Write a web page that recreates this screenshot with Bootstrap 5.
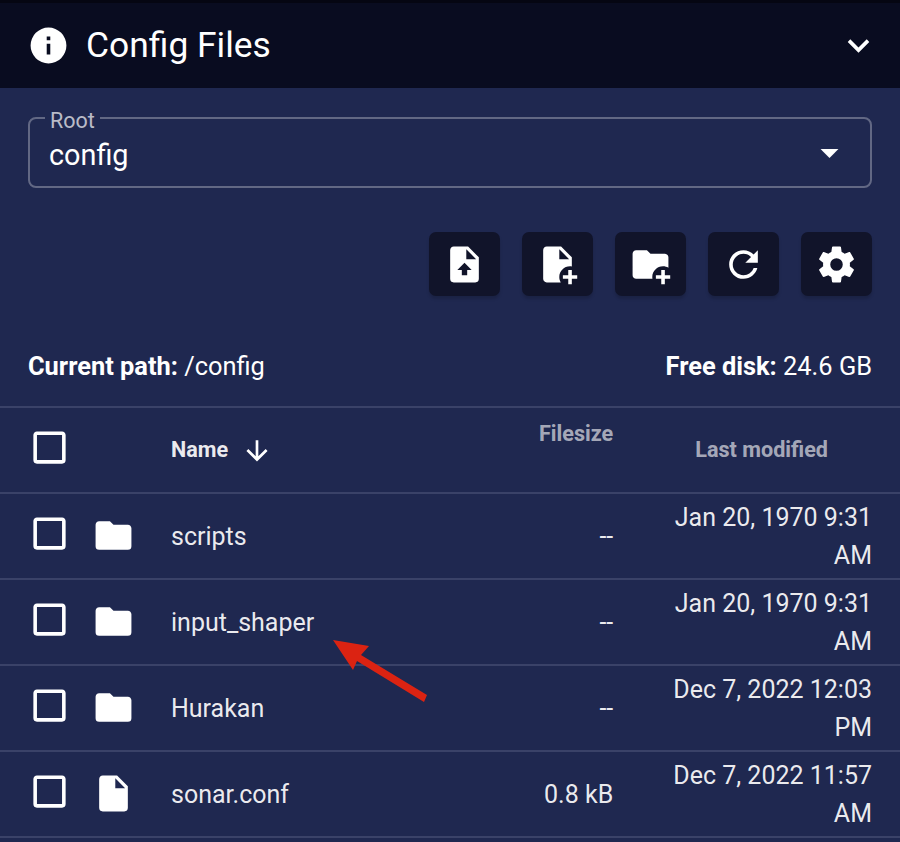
<!DOCTYPE html>
<html lang="en">
<head>
<meta charset="utf-8">
<title>Config Files</title>
<link rel="stylesheet" href="https://cdn.jsdelivr.net/npm/bootstrap@5.3.0/dist/css/bootstrap.min.css">
<style>
html,body{height:842px;overflow:hidden}
body{background:#1f2850;color:#fff;font-family:Roboto,"Liberation Sans",sans-serif;font-size:25px;position:relative}
.panel-head{height:88px;background:#090c20;border-top:3px solid #050612;padding:0 20px 0 27px}
.panel-title{font-size:35.4px;font-weight:400;margin:0}
.ico{width:43px;height:43px;fill:#fff;flex:none;display:block}
.root-box{margin:16px 28px 0;height:84px;border:2px solid rgba(255,255,255,.3);border-radius:8px;padding:0 19px;min-width:0}
.root-box legend{float:none;width:auto;font-size:21.5px;line-height:1;margin:0 0 0 -4px;padding:6px 5px 0;color:rgba(255,255,255,.7)}
.root-line{margin-top:-1px}
.root-val{font-size:28.8px;line-height:34px;margin-top:6px}
.tools{padding:44px 28px 0;gap:22px}
.tool-btn{width:71px;height:64px;background:#11142a;border:0;border-radius:7px;padding:0;box-shadow:0 3px 3px rgba(0,0,0,.15)}
.tool-btn:hover{background:#11142a}
.path-row{padding:52px 28px 0;height:110px;line-height:36px;font-size:25.4px}
.path-row strong{font-weight:700}
.file-table{table-layout:fixed;width:900px;margin:0;--bs-table-bg:transparent;--bs-table-color:rgba(255,255,255,.92);border-top:2px solid #3a4268}
.file-table th,.file-table td{border-bottom:2px solid #3a4268;padding:2px 0 0;height:86px;vertical-align:middle}
.file-table th{font-size:21.6px;font-weight:700;line-height:30px}
.file-table .c-check{width:92px;padding:0 0 0 28px}
.file-table .c-check .ico{margin-bottom:6px}
.file-table .c-icon{width:79px;padding:0}
.file-table .c-icon .ico{margin-bottom:2px}
.file-table .c-size{width:171px;text-align:right;padding-right:28.8px}
.file-table .c-date{width:258px;text-align:right;padding:2px 28px 0 28.8px;line-height:38px}
.file-table th.c-date{padding-top:0}
.file-table .head-muted{color:rgba(255,255,255,.62)}
.sort-ico{width:32px;height:32px;fill:#fff;display:inline-block;margin-left:13px;vertical-align:-10px}
.sort-gap{display:inline-block;width:44px;height:30px;vertical-align:top}
.file-table .th-up{vertical-align:top;padding-top:11px}
.marker{position:absolute;left:325px;top:632px;width:110px;height:75px}
</style>
</head>
<body>
<header class="panel-head d-flex align-items-center justify-content-between">
  <div class="d-flex align-items-center gap-3">
    <svg class="ico" viewBox="0 0 24 24"><path d="M13,9H11V7H13M13,17H11V11H13M12,2A10,10 0 0,0 2,12A10,10 0 0,0 12,22A10,10 0 0,0 22,12A10,10 0 0,0 12,2Z"/></svg>
    <h1 class="panel-title">Config Files</h1>
  </div>
  <svg class="ico" viewBox="0 0 24 24"><path d="M7.41,8.58L12,13.17L16.59,8.58L18,10L12,16L6,10L7.41,8.58Z"/></svg>
</header>

<fieldset class="root-box">
  <legend>Root</legend>
  <div class="root-line d-flex align-items-center justify-content-between">
    <span class="root-val">config</span>
    <svg class="ico" viewBox="0 0 24 24"><path d="M7,10L12,15L17,10H7Z"/></svg>
  </div>
</fieldset>

<div class="tools d-flex justify-content-end">
  <button class="btn tool-btn d-flex align-items-center justify-content-center" aria-label="Upload file"><svg class="ico" viewBox="0 0 24 24"><path fill-rule="evenodd" d="M6,2C4.89,2 4,2.89 4,4V20A2,2 0 0,0 6,22H18A2,2 0 0,0 20,20V8L14,2H6M13,3.5L18.5,9H13V3.5M12,11L16,15H13.5V18H10.5V15H8L12,11Z"/></svg></button>
  <button class="btn tool-btn d-flex align-items-center justify-content-center" aria-label="New file"><svg class="ico" viewBox="0 0 24 24"><path d="M14 2H6C4.9 2 4 2.9 4 4V20C4 21.1 4.9 22 6 22H13.81C13.28 21.09 13 20.05 13 19C13 15.69 15.69 13 19 13C19.34 13 19.67 13.03 20 13.08V8L14 2M13 9V3.5L18.5 9H13M20 15V18H23V20H20V23H18V20H15V18H18V15H20Z"/></svg></button>
  <button class="btn tool-btn d-flex align-items-center justify-content-center" aria-label="New folder"><svg class="ico" viewBox="0 0 24 24"><path d="M13 19C13 19.34 13.04 19.67 13.09 20H4C2.9 20 2 19.11 2 18V6C2 4.89 2.89 4 4 4H10L12 6H20C21.1 6 22 6.89 22 8V13.81C21.12 13.3 20.09 13 19 13C15.69 13 13 15.69 13 19M20 18V15H18V18H15V20H18V23H20V20H23V18H20Z"/></svg></button>
  <button class="btn tool-btn d-flex align-items-center justify-content-center" aria-label="Refresh"><svg class="ico" viewBox="0 0 24 24"><path d="M17.65,6.35C16.2,4.9 14.21,4 12,4A8,8 0 0,0 4,12A8,8 0 0,0 12,20C15.73,20 18.84,17.45 19.73,14H17.65C16.83,16.33 14.61,18 12,18A6,6 0 0,1 6,12A6,6 0 0,1 12,6C13.66,6 15.14,6.69 16.22,7.78L13,11H20V4L17.65,6.35Z"/></svg></button>
  <button class="btn tool-btn d-flex align-items-center justify-content-center" aria-label="Settings"><svg class="ico" viewBox="0 0 24 24"><path d="M12,15.5A3.5,3.5 0 0,1 8.5,12A3.5,3.5 0 0,1 12,8.5A3.5,3.5 0 0,1 15.5,12A3.5,3.5 0 0,1 12,15.5M19.43,12.97C19.47,12.65 19.5,12.33 19.5,12C19.5,11.67 19.47,11.34 19.43,11L21.54,9.37C21.73,9.22 21.78,8.95 21.66,8.73L19.66,5.27C19.54,5.05 19.27,4.96 19.05,5.05L16.56,6.05C16.04,5.66 15.5,5.32 14.87,5.07L14.5,2.42C14.46,2.18 14.25,2 14,2H10C9.75,2 9.54,2.18 9.5,2.42L9.13,5.07C8.5,5.32 7.96,5.66 7.44,6.05L4.95,5.05C4.73,4.96 4.46,5.05 4.34,5.27L2.34,8.73C2.21,8.95 2.27,9.22 2.46,9.37L4.57,11C4.53,11.34 4.5,11.67 4.5,12C4.5,12.33 4.53,12.65 4.57,12.97L2.46,14.63C2.27,14.78 2.21,15.05 2.34,15.27L4.34,18.73C4.46,18.95 4.73,19.03 4.95,18.95L7.44,17.94C7.96,18.34 8.5,18.68 9.13,18.93L9.5,21.58C9.54,21.82 9.75,22 10,22H14C14.25,22 14.46,21.82 14.5,21.58L14.87,18.93C15.5,18.67 16.04,18.34 16.56,17.94L19.05,18.95C19.27,19.03 19.54,18.95 19.66,18.73L21.66,15.27C21.78,15.05 21.73,14.78 21.54,14.63L19.43,12.97Z"/></svg></button>
</div>

<div class="path-row d-flex justify-content-between">
  <span><strong>Current path:</strong> /config</span>
  <span><strong>Free disk:</strong> 24.6 GB</span>
</div>

<svg width="0" height="0" class="d-none">
  <symbol id="box" viewBox="0 0 24 24"><path d="M19,3H5C3.89,3 3,3.89 3,5V19A2,2 0 0,0 5,21H19A2,2 0 0,0 21,19V5C21,3.89 20.1,3 19,3M19,5V19H5V5H19Z"/></symbol>
  <symbol id="folder" viewBox="0 0 24 24"><path d="M10,4H4C2.89,4 2,4.89 2,6V18A2,2 0 0,0 4,20H20A2,2 0 0,0 22,18V8C22,6.89 21.1,6 20,6H12L10,4Z"/></symbol>
  <symbol id="file" viewBox="0 0 24 24"><path d="M13,9V3.5L18.5,9M6,2C4.89,2 4,2.89 4,4V20A2,2 0 0,0 6,22H18A2,2 0 0,0 20,20V8L14,2H6Z"/></symbol>
</svg>

<table class="table file-table">
  <thead>
    <tr>
      <th class="c-check"><svg class="ico"><use href="#box"/></svg></th>
      <th class="c-icon"></th>
      <th>Name<svg class="sort-ico" viewBox="0 0 24 24"><path d="M11,4H13V16L18.5,10.5L19.92,11.92L12,19.84L4.08,11.92L5.5,10.5L11,16V4Z"/></svg></th>
      <th class="c-size head-muted th-up">Filesize</th>
      <th class="c-date head-muted">Last modified<span class="sort-gap"></span></th>
    </tr>
  </thead>
  <tbody>
    <tr>
      <td class="c-check"><svg class="ico"><use href="#box"/></svg></td>
      <td class="c-icon"><svg class="ico"><use href="#folder"/></svg></td>
      <td>scripts</td><td class="c-size">--</td><td class="c-date">Jan 20, 1970 9:31 AM</td>
    </tr>
    <tr>
      <td class="c-check"><svg class="ico"><use href="#box"/></svg></td>
      <td class="c-icon"><svg class="ico"><use href="#folder"/></svg></td>
      <td>input_shaper</td><td class="c-size">--</td><td class="c-date">Jan 20, 1970 9:31 AM</td>
    </tr>
    <tr>
      <td class="c-check"><svg class="ico"><use href="#box"/></svg></td>
      <td class="c-icon"><svg class="ico"><use href="#folder"/></svg></td>
      <td>Hurakan</td><td class="c-size">--</td><td class="c-date">Dec 7, 2022 12:03 PM</td>
    </tr>
    <tr>
      <td class="c-check"><svg class="ico"><use href="#box"/></svg></td>
      <td class="c-icon"><svg class="ico"><use href="#file"/></svg></td>
      <td>sonar.conf</td><td class="c-size">0.8 kB</td><td class="c-date">Dec 7, 2022 11:57 AM</td>
    </tr>
  </tbody>
</table>

<svg class="marker" viewBox="325 632 110 75" aria-hidden="true">
  <path fill="#db2312" d="M333,640L369,646L361,655L427,695L424,702L357,661L353,670Z"/>
</svg>
</body>
</html>
